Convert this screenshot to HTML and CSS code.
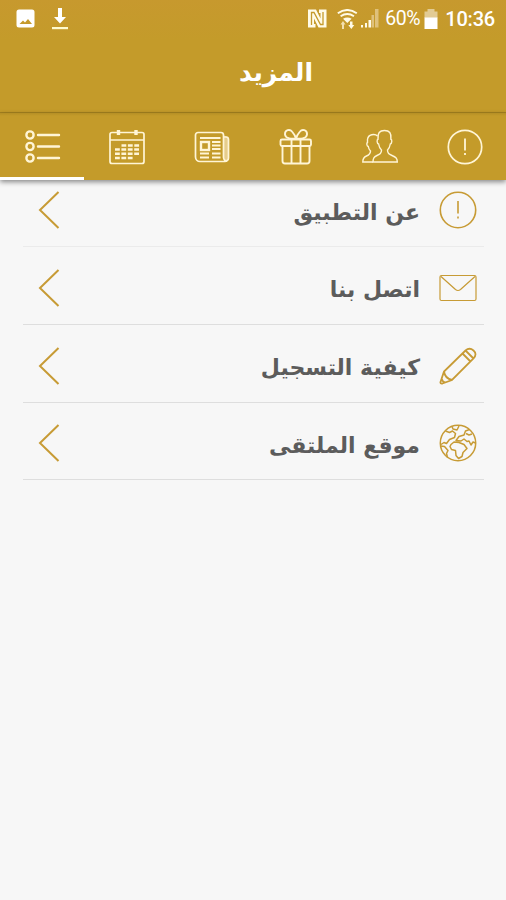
FILE: index.html
```
<!DOCTYPE html>
<html lang="ar">
<head>
  <meta charset="UTF-8">
  <meta name="viewport" content="width=device-width, initial-scale=1.0">
  <title>المزيد</title>
  <link rel="stylesheet" href="styles.css">
</head>
<body>
  <header class="app-header">
    <div class="status-bar">
      <div class="status-left">
        <svg width="20" height="20" viewBox="0 0 20 20">
          <path fill="#fff" fill-rule="evenodd" d="M3 .5h13a2.500 2.500 0 0 1 2.500 2.500v13a2.500 2.500 0 0 1-2.500 2.500H3A2.500 2.500 0 0 1 .5 16V3A2.500 2.500 0 0 1 3 .5zM3.500 15h12.500l-4-5-3 3.500-2-2z"/>
        </svg>
        <svg width="18" height="22" viewBox="0 0 18 22">
          <path fill="#fff" d="M7 0h4v9h4l-6 6.500L3 9h4z"/>
          <path fill="#fffbd0" d="M1 19h16v2.200H1z"/>
        </svg>
      </div>
      <div class="status-right">
        <svg class="nfc" width="19" height="19" viewBox="0 0 19 19">
          <path fill="#fffbe8" d="M0 .5h8l4.500 9V4H11V.5h7.500v18h-8L6 9.500V15h1.500v3.500H0z"/>
          <path fill="none" stroke="#c59a2c" stroke-width="1.300" d="M3.500 16V3.500H6L12.500 15.500H15V3"/>
        </svg>
        <svg class="wifi" width="21" height="20" viewBox="0 0 21 20">
          <path fill="none" stroke="#fffbe8" stroke-width="1.900" d="M.8 4.200q9.500-6.500 19 0M3.600 7.300q6.700-4.500 13.400 0"/>
          <path fill="#fffbe8" d="M6 9.800q4.300-2.600 8.600 0L10.300 14zM13 12.500h2.500V16h1.800L14.300 20l-3-4H13z"/>
          <path fill="#f3dfae" d="M5 20h2v-4.500h1.500L6 12l-2.500 3.500H5z"/>
        </svg>
        <svg class="signal" width="18" height="19" viewBox="0 0 18 19">
          <path fill="#fffbe8" d="M0 16h2v2.500H0zM4 14h2v4.500H4zM7.500 11H10v7.500H7.500z"/>
          <path fill="#dfc17b" d="M10.500 6H13v12.500h-2.500zM14 0h3.500v18.500H14z"/>
        </svg>
        <span class="percent">60%</span>
        <svg class="battery" width="14" height="20" viewBox="0 0 14 20">
          <path fill="#e2cb94" d="M3.500 0h7v2.500H13.500V9H.5V2.500h3z"/>
          <path fill="#fff" d="M.5 8.500h13V20H.5z"/>
        </svg>
        <span class="clock">10:36</span>
      </div>
    </div>
    <h1 class="title" dir="rtl">المزيد</h1>
  </header>

  <nav class="tabs">
    <a class="tab active">
      <svg width="36" height="36" viewBox="0 0 36 36" stroke-width="2.400">
        <circle cx="5" cy="6" r="3.600"/><circle cx="5" cy="17.500" r="3.600"/><circle cx="5" cy="29" r="3.600"/>
        <path stroke-linecap="round" d="M13 6h21M13 17.500h21M13 29h21"/>
      </svg>
    </a>
    <a class="tab">
      <svg width="36" height="36" viewBox="0 0 36 36">
        <rect x="1" y="3.500" width="34" height="31" rx="2"/>
        <path d="M1 11h34"/>
        <path stroke-width="3.400" d="M9.500 1v5M27 1v5"/>
        <path stroke-width="2.600" stroke-dasharray="4.800 1.600" d="M12.500 16.500H31M6 20.500h25M6 24.800h25M6 29h18"/>
      </svg>
    </a>
    <a class="tab">
      <svg width="36" height="36" viewBox="0 0 36 36">
        <path fill="#e6cd8c" d="M29.500 6.500q5 .5 5 4V29q0 3-3 3.500l-2-3z" stroke="none"/>
        <path d="M29.500 28.500V6A2.500 2.500 0 0 0 27 3.500H4A2.500 2.500 0 0 0 1.500 6v22A4.500 4.500 0 0 0 6 32.500h25a3.500 3.500 0 0 0 3.500-3.500V10.500A2.500 2.500 0 0 0 32 8h-2.500M29.500 28.500q.5 3.500 3 3"/>
        <rect x="7" y="13" width="8" height="8" stroke-width="2.400"/>
        <path d="M6 9h20.500M18 13h8.500M18 16.500h8.500M18 20h8.500M6 24.500h9M18 24.500h8.500M6 28.500h9M18 28.500h8.500" stroke-width="2"/>
      </svg>
    </a>
    <a class="tab">
      <svg width="36" height="36" viewBox="0 0 36 36" stroke-width="1.900">
        <rect x="2.500" y="10.500" width="30.500" height="6.500" rx="1.500"/>
        <path d="M4.500 17v15q0 2.500 2.500 2.500h22q2.500 0 2.500-2.500V17M13.500 10.500v24M22.500 10.500v24M18 9.500C14 10 7.500 10 7 5.500 6.700.5 12 0 14 2.500c2 2.300 3.500 5 4 7 .5-2 2-4.700 4-7C24 0 29.300.5 29 5.500c-.5 4.500-7 4.500-11 4z"/>
      </svg>
    </a>
    <a class="tab">
      <svg width="36" height="36" viewBox="0 0 36 36" stroke-width="1.400">
        <path d="M11 33h24.300c0-4-1.800-5-5.300-6.500-3-1.300-4.500-2-4.500-5.500 1.800-1.500 2.500-4 2.800-6 1.700-.3 2-4.500.6-4.800C29.500 4 27.500 1.500 22.500 1.500S15.500 4 16 10.200c-1.400.3-1.100 4.500.6 4.800.3 2 1 4.500 2.900 6 0 3.500-1.500 4.200-4.500 5.500-3 1.500-4 2.500-4 6.500z"/>
        <path d="M15.500 7C13 4.500 6 5 5.500 10.500v3c-1.200.5-.7 4 .8 4 .2 1.800.8 3 2.200 4.500 0 3-1.500 4-4 5C1.500 28.200.8 30 .8 33H11"/>
      </svg>
    </a>
    <a class="tab">
      <svg width="36" height="36" viewBox="0 0 36 36">
        <circle cx="18" cy="18" r="16.700"/>
        <path d="M18 9.500v12M18 24v2" stroke-width="1.800"/>
      </svg>
    </a>
  </nav>

  <main class="menu" dir="rtl">
    <a class="menu-item">
      <svg class="icon" width="38" height="38" viewBox="0 0 38 38">
        <circle cx="19" cy="19" r="17.700" stroke-width="1.600"/>
        <path d="M19 10v12.500M19 25.500v2" stroke-width="1.600"/>
      </svg>
      <span class="label">عن التطبيق</span>
      <svg class="chevron" width="22" height="38" viewBox="0 0 22 38"><path d="M20.500 1L2 19l18.500 18"/></svg>
    </a>
    <a class="menu-item">
      <svg class="icon" width="38" height="38" viewBox="0 0 38 38" stroke-width="1.200">
        <rect x="1" y="6.500" width="36" height="25" rx="1.500"/>
        <path d="M2 7.500L16.500 20.500q2.500 2 5 0L36 7.500"/>
      </svg>
      <span class="label">اتصل بنا</span>
      <svg class="chevron" width="22" height="38" viewBox="0 0 22 38"><path d="M20.500 1L2 19l18.500 18"/></svg>
    </a>
    <a class="menu-item">
      <svg class="icon" width="38" height="38" viewBox="0 0 38 38" stroke-width="1.800">
        <path d="M1.500 35L5 24.500 26.500 3.500q4-3.500 8 0t0 8L13 33l-9.500 3.500q-2.500.5-2-1.500zM5 24.500q1 7 8 8.500M2.500 31.500q1 3.500 4 4M23.500 6.500l8 8M26.500 3.500l8 8"/>
      </svg>
      <span class="label">كيفية التسجيل</span>
      <svg class="chevron" width="22" height="38" viewBox="0 0 22 38"><path d="M20.500 1L2 19l18.500 18"/></svg>
    </a>
    <a class="menu-item">
      <svg class="icon" width="38" height="38" viewBox="0 0 38 38" stroke-width="1.500" stroke-linejoin="round">
        <circle cx="19" cy="19" r="17.700"/>
        <path d="M13 2.500l1 2.500 4 1 2-4M6.500 7l4 1.500 3-1.500 3 2.500-1 4-5 2-3 4-2.500-1-3 2M1.500 22l4 .5 3.500 4-1.500 3 1 4"/>
        <path d="M30.500 5.500l-4 1.500-1.500 4-5 1.500-3 4 5 .5 3-2 3 2.500 2-.5 2 4 2-3 2.500 1M27 9.500l3 1.500 3-1M12 20.500l3-2.500 5 .5 5 2 3 4-4 4-1 4-3.500 2-2.500-3-.5-5-4-1-1.500-3z"/>
      </svg>
      <span class="label">موقع الملتقى</span>
      <svg class="chevron" width="22" height="38" viewBox="0 0 22 38"><path d="M20.500 1L2 19l18.500 18"/></svg>
    </a>
  </main>
</body>
</html>
```
FILE: styles.css
```
body {
  margin: 0;
  min-height: 900px;
  background: #f7f7f7;
  font-family: "DejaVu Sans", sans-serif;
}

svg {
  display: block;
  flex: none;
}

/* Header */
.app-header {
  height: 112px;
  background: linear-gradient(#c7992e, #c49b2a 40px);
  border-bottom: 1px solid #a5821f;
  color: #fff;
}

.status-bar {
  display: flex;
  justify-content: space-between;
  height: 37px;
  padding: 0 11px 0 16px;
  font-family: Roboto, sans-serif;
}

.status-left,
.status-right {
  display: flex;
  align-items: center;
}

.status-left {
  gap: 15px;
}

.nfc {
  margin-right: 10px;
}

.wifi {
  margin-right: 3px;
}

.signal {
  margin-right: 6px;
}

.percent {
  width: 36px;
  font-size: 19.5px;
  letter-spacing: -0.5px;
}

.battery {
  margin: 0 7px 0 3px;
}

.clock {
  font-size: 20px;
  font-weight: 500;
  letter-spacing: -0.2px;
}

.title {
  margin: 20px 0 0 46px;
  font-size: 25px;
  line-height: 32px;
  text-align: center;
}

/* Tabs */
.tabs {
  display: grid;
  grid-template-columns: repeat(6, 1fr);
  height: 67px;
  background: linear-gradient(#b58f25, #c49b2a 3px);
  box-shadow: 0 2px 5px rgba(0, 0, 0, 0.45);
}

.tab {
  display: flex;
  justify-content: center;
  padding: 16px 0 0 2px;
  border-bottom: 3px solid transparent;
}

.tab.active {
  border-color: #fff;
}

.tab svg {
  fill: none;
  stroke: #fff5d6;
}

.tab svg:not([stroke-width]) {
  stroke-width: 1.7;
}

/* Menu list */
.menu {
  padding: 0 22px 0 23px;
}

.menu-item {
  display: flex;
  align-items: center;
  box-sizing: border-box;
  height: 78px;
  padding: 4px 7px 0 15px;
  border-bottom: 1px solid #dedede;
}

.menu-item:first-child {
  height: 67px;
  padding-top: 0;
  padding-bottom: 6px;
  border-color: #ebebeb;
}

.menu-item:last-child {
  height: 77px;
}

.menu-item svg {
  fill: none;
  stroke: #c79b35;
}

.label {
  flex: 1;
  margin-right: 19px;
  padding-top: 4px;
  color: #5c5c5c;
  font-size: 22px;
  font-weight: bold;
}

.chevron {
  stroke-width: 2;
}
```
